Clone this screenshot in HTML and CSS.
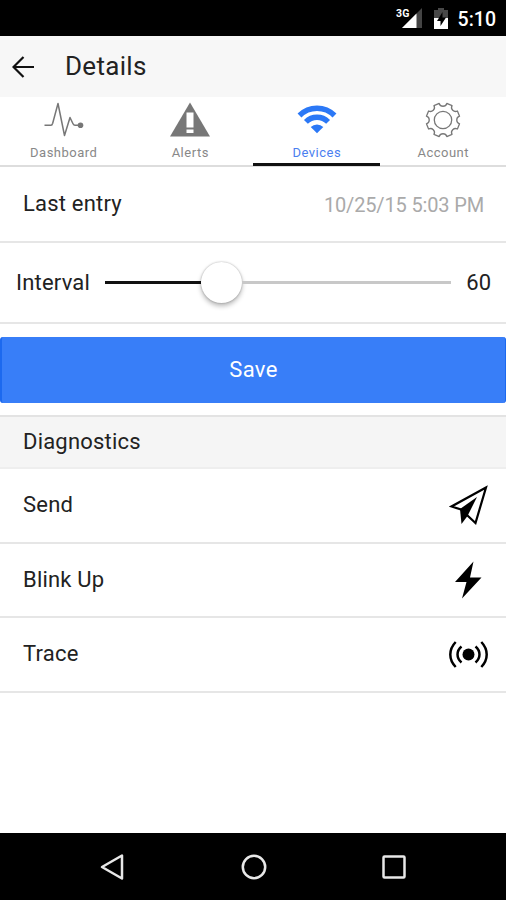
FILE: index.html
```html
<!DOCTYPE html>
<html lang="en">
<head>
<meta charset="utf-8">
<title>Details</title>
<link rel="stylesheet" href="styles.css">
</head>
<body>
<div class="statusbar">
  <svg class="signal" width="28" height="24" viewBox="0 0 28 24">
    <path d="M27 2v20H7z" fill="#444"/>
    <path d="M21.500 7.500V22H7z" fill="#fff"/>
    <text x="1" y="11" class="network">3G</text>
  </svg>
  <svg class="battery" width="14" height="21" viewBox="0 0 14 21">
    <path d="M4 0h6v2h4v9H0V2h4z" fill="#484848"/>
    <path d="M0 10h14v11H0z" fill="#fff"/>
    <path d="M8.500 4L3 13h3.500v5L12 9.500H8.500z" fill="#000"/>
  </svg>
  <span class="clock">5:10</span>
</div>
<header class="header">
  <svg class="back" width="22" height="22" viewBox="0 0 22 22"><path d="M11.500 1L1.500 11l10 10M1.500 11H22"/></svg>
  <h1 class="title">Details</h1>
</header>
<nav class="tabs">
  <a class="tab">
    <svg class="tab-icon" width="40" height="40" viewBox="-20 -20 40 40">
      <path d="M-19.500 5.300h6.500c1 0 1.400-1 1.700-2L-6-16.500L.5 15.500L6-2.500L9 3.800c.5 1 1 1.500 2 1.500H17" fill="none" stroke="#777" stroke-width="1.500" stroke-linejoin="round"/>
      <circle cx="16.500" cy="5.300" r="2.800" fill="#777"/>
    </svg>
    <span class="tab-label">Dashboard</span>
  </a>
  <a class="tab">
    <svg class="tab-icon" width="40" height="40" viewBox="-20 -20 40 40">
      <path d="M0-17.500L20 16.500h-40z" fill="#777"/>
      <path d="M-3.500-7.500h7v15h-7zM-3.500 9.500h7v3.500h-7z" fill="#fff"/>
    </svg>
    <span class="tab-label">Alerts</span>
  </a>
  <a class="tab tab-active">
    <svg class="tab-icon" width="40" height="40" viewBox="-20 -20 40 40">
      <path d="M-17.500-4.500a24.700 24.700 0 0 1 35 0M-11.100 1.900a15.700 15.700 0 0 1 22.200 0" fill="none" stroke="#2b78f6" stroke-width="5.500"/>
      <path d="M0 13.300L-6.300 7a9 9 0 0 1 12.600 0z" fill="#2b78f6"/>
    </svg>
    <span class="tab-label">Devices</span>
  </a>
  <a class="tab">
    <svg class="tab-icon" width="40" height="40" viewBox="-20 -20 40 40">
      <g fill="none" stroke="#777" stroke-width="1.300" stroke-linejoin="round">
        <path d="M16.560-3.820A4 4 0 0 0 16.560 3.820L14.410 9.010A4 4 0 0 0 9.010 14.410L3.820 16.560A4 4 0 0 0-3.820 16.560L-9.010 14.410A4 4 0 0 0-14.410 9.010L-16.560 3.820A4 4 0 0 0-16.560-3.820L-14.410-9.010A4 4 0 0 0-9.010-14.410L-3.820-16.560A4 4 0 0 0 3.820-16.560L9.010-14.410A4 4 0 0 0 14.410-9.010z"/>
        <circle r="8.700"/>
      </g>
    </svg>
    <span class="tab-label">Account</span>
  </a>
</nav>
<main>
  <div class="row row-entry"><span class="label-entry">Last entry</span><span class="date">10/25/15 5:03 PM</span></div>
  <div class="row row-interval">
    <span class="label-interval">Interval</span>
    <div class="slider"><div class="fill"></div><div class="thumb"></div><div class="rest"></div></div>
    <span class="value">60</span>
  </div>
  <button class="save">Save</button>
  <h2 class="divider">Diagnostics</h2>
  <div class="row item"><span class="label-send">Send</span>
    <svg width="40" height="40" viewBox="0 0 40 40">
      <path d="M37 2.500L2.500 21.500L12 24.500L26.500 38z" fill="none" stroke="#000" stroke-width="2.200"/>
      <path d="M28 12L11 24L12.500 39L18.500 31z" fill="#000"/>
    </svg>
  </div>
  <div class="row item"><span class="label-blink">Blink Up</span>
    <svg width="40" height="40" viewBox="0 0 40 40"><path d="M24.500 1.500L6 22h11.500L13 38.500L32.500 17.500H21z" fill="#000"/></svg>
  </div>
  <div class="row item"><span class="label-trace">Trace</span>
    <svg width="40" height="40" viewBox="0 0 40 40">
      <circle cx="19.500" cy="20.500" r="6" fill="#000"/>
      <path d="M12.500 12.500c-5.300 4.500-5.300 11.500 0 16M26.500 12.500c5.300 4.500 5.300 11.500 0 16M6.700 8c-7.200 7.500-7.200 17.500 0 25M32.300 8c7.200 7.500 7.200 17.500 0 25" fill="none" stroke="#000" stroke-width="2.500"/>
    </svg>
  </div>
</main>
<footer class="navbar">
  <svg width="28" height="28" viewBox="-14 -14 28 28"><path d="M9-11.500v23L-11 0z"/></svg>
  <svg width="28" height="28" viewBox="-14 -14 28 28"><circle r="11.200"/></svg>
  <svg width="28" height="28" viewBox="-14 -14 28 28"><rect x="-10.500" y="-10.500" width="21" height="21" rx="1"/></svg>
</footer>
</body>
</html>
```
FILE: styles.css
```css
* { box-sizing: border-box; }
body {
  margin: 0;
  width: 506px;
  height: 900px;
  display: flex;
  flex-direction: column;
  background: #fff;
  color: #222;
  font: 22px/28px Roboto, "Liberation Sans", sans-serif;
  letter-spacing: .2px;
  overflow: hidden;
}
svg { display: block; flex: none; }
.statusbar {
  height: 36px;
  flex: none;
  display: flex;
  align-items: flex-start;
  justify-content: flex-end;
  padding: 6px 10px 0 0;
  background: #000;
  color: #fff;
}
.signal { margin-right: 11px; }
.network { font-size: 10.500px; font-weight: 700; fill: #fff; }
.battery { margin: 2px 10px 0 0; }
.clock { font-size: 19.500px; font-weight: 500; line-height: 28px; letter-spacing: 0; }
.header {
  height: 61px;
  flex: none;
  display: flex;
  align-items: center;
  padding-left: 12px;
  background: #f7f7f7;
}
.back { fill: none; stroke: #111; stroke-width: 2.200; }
.title { margin: 0 0 2px 31px; font-size: 26px; font-weight: 400; letter-spacing: .3px; }
.tabs {
  height: 70px;
  flex: none;
  display: grid;
  grid-template-columns: repeat(4, 1fr);
  border-bottom: 2px solid #ddd;
}
.tab {
  height: 69px;
  display: flex;
  flex-direction: column;
  align-items: center;
  padding: 3px 0 0 1px;
  color: #888;
}
.tab-active { color: #4a7ef0; border-bottom: 3px solid #111; }
.tab-label { margin-top: 5px; font-size: 13px; line-height: 15px; letter-spacing: .5px; }
.row { display: flex; align-items: center; border-bottom: 2px solid #e6e6e6; }
.row-entry { height: 76px; justify-content: space-between; padding: 0 22px 0 23px; }
.date { color: #aaa; font-size: 20px; letter-spacing: -.15px; padding-top: 2px; }
.row-interval { height: 81px; padding: 0 15px 0 16px; }
.slider { width: 346px; margin-left: 15px; display: flex; align-items: center; }
.fill { width: 96px; height: 3px; background: #111; }
.rest { flex: 1; height: 3px; background: #c8c8c8; }
.thumb {
  width: 41px;
  height: 41px;
  border-radius: 50%;
  background: #fff;
  box-shadow: 0 0 2px rgba(0,0,0,.3), 0 3px 5px rgba(0,0,0,.28);
}
.value { margin-left: auto; letter-spacing: 0; }
.save {
  display: block;
  width: 100%;
  height: 66px;
  margin: 13px 0 12px;
  padding: 0;
  border: solid #1c69ef;
  border-width: 0 1px 0 2px;
  border-radius: 3px;
  background: #387ef8;
  color: #fff;
  font: 400 22px/28px Roboto, sans-serif;
  letter-spacing: .4px;
}
.divider {
  height: 54px;
  margin: 0;
  padding-left: 23px;
  border: solid #e3e3e3;
  border-width: 2px 0;
  border-bottom-color: #eee;
  background: #f5f5f5;
  font-size: 22px;
  font-weight: 400;
  line-height: 50px;
}
.item { height: 74.500px; justify-content: space-between; padding: 0 17px 0 23px; }
.navbar {
  height: 67px;
  flex: none;
  margin-top: auto;
  display: flex;
  align-items: center;
  justify-content: center;
  gap: 112.500px;
  padding-left: 1px;
  background: #000;
}
.navbar svg { fill: none; stroke: #e8e8e8; stroke-width: 2.500; stroke-linejoin: round; }
```
